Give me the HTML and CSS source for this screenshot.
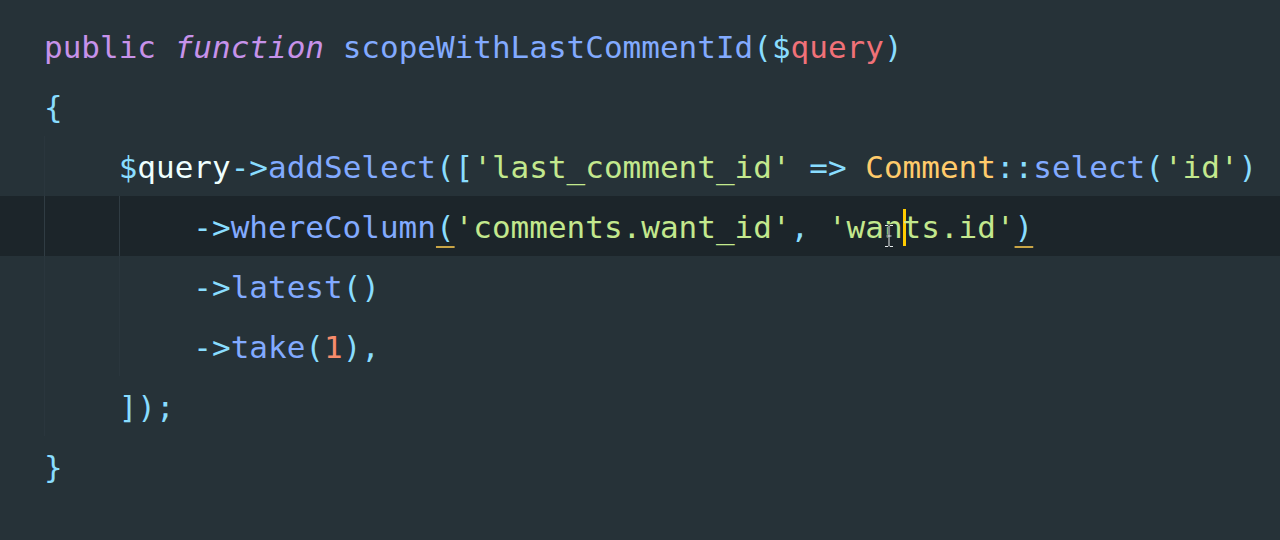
FILE: index.html
```html
<!DOCTYPE html>
<html lang="en">
<head>
    <meta charset="UTF-8">
    <title>scopeWithLastCommentId</title>
    <link rel="stylesheet" href="styles.css">
</head>
<body>
    <div class="editor">
        <div class="line"><span class="kw">public</span> <span class="kw fn">function</span> <span class="meth">scopeWithLastCommentId</span><span class="punc">(</span><span class="punc">$</span><span class="var">query</span><span class="punc">)</span></div>
        <div class="line"><span class="punc">{</span></div>
        <div class="line"><span class="indent">    </span><span class="punc">$</span><span class="plain">query</span><span class="punc">-&gt;</span><span class="meth">addSelect</span><span class="punc">([</span><span class="str">'last_comment_id'</span> <span class="punc">=&gt;</span> <span class="cls">Comment</span><span class="punc">::</span><span class="meth">select</span><span class="punc">(</span><span class="str">'id'</span><span class="punc">)</span></div>
        <div class="line current"><span class="indent">    </span><span class="indent">    </span><span class="punc">-&gt;</span><span class="meth">whereColumn</span><span class="punc match">(</span><span class="str">'comments.want_id'</span><span class="punc">,</span> <span class="str">'wan<span class="caret"></span>ts.id'</span><span class="punc match">)</span>
            <svg class="ibeam" width="12" height="24" viewBox="0 0 12 24">
                <path d="M2 1.5h3l1 1 1-1h3M6 2.5v19M2 22.5h3l1-1 1 1h3M3.5 12h5" fill="none" stroke="#1a2227" stroke-width="2.4"/>
                <path d="M2 1.5h3l1 1 1-1h3M6 2.5v19M2 22.5h3l1-1 1 1h3M3.5 12h5" fill="none" stroke="#e8eef0" stroke-width="1"/>
            </svg>
        </div>
        <div class="line"><span class="indent">    </span><span class="indent">    </span><span class="punc">-&gt;</span><span class="meth">latest</span><span class="punc">()</span></div>
        <div class="line"><span class="indent">    </span><span class="indent">    </span><span class="punc">-&gt;</span><span class="meth">take</span><span class="punc">(</span><span class="num">1</span><span class="punc">),</span></div>
        <div class="line"><span class="indent">    </span><span class="punc">]);</span></div>
        <div class="line"><span class="punc">}</span></div>
    </div>
</body>
</html>
```

FILE: styles.css
```css
body {
    margin: 0;
    background-color: #263238;
}

.editor {
    padding-top: 16px;
    font-family: "DejaVu Sans Mono", "Liberation Mono", monospace;
    font-size: 31px;
    color: #eeffff;
}

.line {
    height: 60px;
    line-height: 62px;
    padding-left: 44px;
    white-space: pre;
}

.line.current {
    position: relative;
    background-color: #1c252a;
}

.indent {
    display: inline-block;
    vertical-align: top;
    height: 60px;
    box-shadow: inset 1px 0 0 #2a363d;
}

.current .indent {
    box-shadow: inset 1px 0 0 #303c43;
}

.kw {
    color: #c792ea;
}

.fn {
    font-style: italic;
}

.meth {
    color: #82aaff;
}

.punc {
    color: #89ddff;
}

.var {
    color: #f07178;
}

.plain {
    color: #eeffff;
}

.str {
    color: #c3e88d;
}

.cls {
    color: #ffcb6b;
}

.num {
    color: #f78c6c;
}

.match {
    text-decoration: underline;
    text-decoration-color: #c9a546;
    text-decoration-thickness: 2px;
    text-underline-offset: 8px;
}

.caret {
    display: inline-block;
    width: 0;
    height: 37px;
    border-left: 3px solid #ffcc00;
    margin-right: -3px;
    vertical-align: -8px;
}

.ibeam {
    position: absolute;
    left: 883px;
    top: 28px;
}
```
